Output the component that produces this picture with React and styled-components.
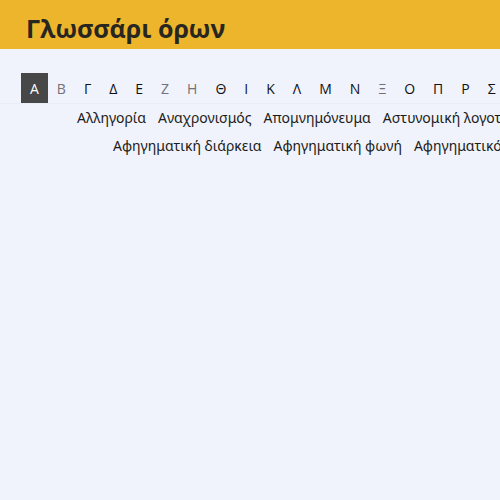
import React from "react";
import styled, { createGlobalStyle } from "styled-components";

const GlobalStyle = createGlobalStyle`
  * { box-sizing: border-box; }
  body {
    margin: 0;
    background: #f0f3fb;
    color: #1c1c20;
    font-family: "Noto Sans", "Open Sans", sans-serif;
    font-size: 14px;
    overflow-x: hidden;
  }
`;

const Header = styled.header`
  padding: 8px 26px 1px;
  background: #edb52b;
`;

const Title = styled.h1`
  margin: 0;
  font-family: "Open Sans", "Noto Sans", sans-serif;
  font-size: 25px;
  line-height: 40px;
  font-weight: 700;
  color: #272620;
  white-space: nowrap;
`;

const Main = styled.main`
  padding-top: 24px;
  overflow: hidden;
`;

const Alphabet = styled.nav`
  display: flex;
  padding-left: 21px;
  border-bottom: 1px solid #e9edf5;
  font-family: "Open Sans", "Noto Sans", sans-serif;
`;

const Letter = styled.button`
  flex: none;
  margin: 0;
  padding: 2px 9px 0;
  border: 0;
  font: inherit;
  line-height: 28px;
  background: ${(p) => (p.$active ? "#474747" : "transparent")};
  color: ${(p) => (p.$active ? "#ffffff" : "#111114")};
  cursor: pointer;

  &:disabled {
    color: #707277;
    cursor: default;
  }
`;

const TermRow = styled.ul`
  display: flex;
  gap: 12px;
  margin: 0;
  padding: 0 0 0 ${(p) => p.$indent}px;
  list-style: none;
  line-height: 28px;
  white-space: nowrap;
`;

const Term = styled.a`
  color: inherit;
  text-decoration: none;
`;

const letters = [..."ΑΒΓΔΕΖΗΘΙΚΛΜΝΞΟΠΡΣ"];
const empty = new Set([..."ΒΖΗΞ"]);
const rows = [
  { indent: 77, terms: ["Αλληγορία", "Αναχρονισμός", "Απομνημόνευμα", "Αστυνομική λογοτεχνία"] },
  { indent: 113, terms: ["Αφηγηματική διάρκεια", "Αφηγηματική φωνή", "Αφηγηματικότητα"] },
];

export default function App() {
  return (
    <>
      <GlobalStyle />
      <Header>
        <Title>Γλωσσάρι όρων</Title>
      </Header>
      <Main>
        <Alphabet aria-label="Αλφάβητο">
          {letters.map((l, i) => (
            <Letter key={l} type="button" $active={i === 0} disabled={empty.has(l)}>
              {l}
            </Letter>
          ))}
        </Alphabet>
        {rows.map((row) => (
          <TermRow key={row.indent} $indent={row.indent}>
            {row.terms.map((t) => (
              <li key={t}>
                <Term href="#">{t}</Term>
              </li>
            ))}
          </TermRow>
        ))}
      </Main>
    </>
  );
}
